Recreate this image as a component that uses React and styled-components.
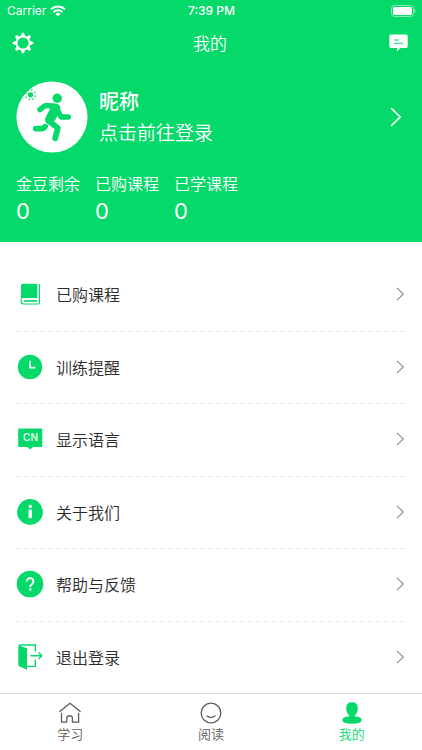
import React from "react";
import styled, { createGlobalStyle } from "styled-components";

const colors = {
  green: "#05d96a",
  text: "#2b2b2b",
  muted: "#5c5c5c",
  chevron: "#8c8c8c",
  dash: "#ececec",
  line: "#dcdcdc",
};

const GlobalStyle = createGlobalStyle`
  * {
    box-sizing: border-box;
  }

  body {
    margin: 0;
    background-color: white;
    font-family: "Noto Sans CJK SC", sans-serif;
    font-weight: 350;
    color: ${colors.text};
  }

  button {
    border: none;
    background: none;
    padding: 0;
    margin: 0;
    font: inherit;
    color: inherit;
    text-align: left;
    cursor: pointer;
  }

  svg {
    display: block;
    flex: none;
  }
`;

const Page = styled.div`
  min-height: 100vh;
  display: flex;
  flex-direction: column;
`;

const Header = styled.header`
  background-color: ${colors.green};
  color: white;
  padding-bottom: 15px;
`;

const StatusBar = styled.div`
  display: grid;
  grid-template-columns: 1fr auto 1fr;
  align-items: center;
  height: 22px;
  padding: 0 6px 0 7px;
  font-family: Inter, sans-serif;
  font-size: 12px;
  font-weight: 400;
  line-height: 22px;

  .carrier {
    display: flex;
    align-items: center;
    gap: 4px;
  }

  .time {
    font-weight: 500;
  }

  .battery {
    justify-self: end;
  }
`;

const NavBar = styled.div`
  display: grid;
  grid-template-columns: 1fr auto 1fr;
  align-items: center;
  height: 42px;
  padding: 0 14px 0 12px;

  h1 {
    margin: 0;
    font-size: 17px;
    line-height: 24px;
    font-weight: 350;
  }

  button:last-child {
    justify-self: end;
  }
`;

const Profile = styled.button`
  && {
    display: flex;
    align-items: center;
    width: 100%;
    margin-top: 17px;
    padding: 0 18px 0 16px;
  }

  .info {
    flex: 1;
    margin-left: 11px;
    display: flex;
    flex-direction: column;
    gap: 2px;
  }

  .name {
    font-size: 20px;
    line-height: 28px;
    font-weight: 500;
  }

  .hint {
    font-size: 19px;
    line-height: 30px;
  }
`;

const Stats = styled.dl`
  display: flex;
  gap: 15px;
  margin: 18px 16px 0;

  dt {
    font-size: 16px;
    line-height: 24px;
  }

  dd {
    margin: 0;
    font-family: Inter, sans-serif;
    font-size: 22px;
    font-weight: 400;
    line-height: 32px;
  }
`;

const Menu = styled.ul`
  flex: 1;
  display: flex;
  flex-direction: column;
  list-style: none;
  margin: 0;
  padding: 16px 16px 0;
`;

const MenuItem = styled.li`
  flex: 1;
  display: flex;
  min-height: 56px;

  & + & {
    background: repeating-linear-gradient(
        to right,
        ${colors.dash} 0 5px,
        transparent 5px 8px
      )
      top / 100% 1px no-repeat;
  }

  button {
    flex: 1;
    display: flex;
    align-items: center;
    font-size: 16px;
    line-height: 24px;
  }

  .icon {
    width: 28px;
    margin-right: 12px;
  }

  .label {
    flex: 1;
  }
`;

const TabBar = styled.nav`
  display: flex;
  border-top: 1px solid ${colors.line};
  padding: 7px 0;
`;

const Tab = styled.button`
  && {
    flex: 1;
    display: flex;
    flex-direction: column;
    align-items: center;
    font-size: 13px;
    line-height: 18px;
    color: ${(props) => (props.$active ? colors.green : colors.muted)};
  }
`;

const Wifi = () => (
  <svg width="16" height="12" viewBox="0 0 16 12" fill="none" stroke="white">
    <path strokeWidth="2" d="M1 4.2a10.2 10.2 0 0 1 14 0" />
    <path strokeWidth="2" d="M3.6 7a6.4 6.4 0 0 1 8.8 0" />
    <path fill="white" stroke="none" d="M5.5 9a3.7 3.7 0 0 1 5 0L8 11.6z" />
  </svg>
);

const Battery = () => (
  <svg className="battery" width="25" height="12" viewBox="0 0 25 12">
    <rect x="0.5" y="0.5" width="22" height="11" rx="3" fill="none" stroke="white" strokeOpacity="0.5" />
    <rect x="2" y="2" width="19" height="8" rx="1.5" fill="white" />
    <path d="M23.5 4a2.2 2.2 0 0 1 0 4z" fill="white" fillOpacity="0.6" />
  </svg>
);

const Gear = () => (
  <svg width="22" height="22" viewBox="-11 -11 22 22" fill="none" stroke="white">
    <circle r="6.5" strokeWidth="1.8" />
    {[0, 45, 90, 135, 180, 225, 270, 315].map((angle) => (
      <path
        key={angle}
        transform={`rotate(${angle})`}
        fill="white"
        stroke="none"
        d="M-2.2-6.8h4.4L1-10.3h-2z"
      />
    ))}
  </svg>
);

const Message = () => (
  <svg width="19" height="18" viewBox="0 0 19 18">
    <path
      fill="white"
      d="M2 0.5h15a1.7 1.7 0 0 1 1.7 1.7v10a1.7 1.7 0 0 1-1.7 1.7h-5.2L8 17.3v-3.4H2A1.7 1.7 0 0 1 .3 12.2v-10A1.7 1.7 0 0 1 2 .5z"
    />
    <path stroke={colors.green} strokeWidth="1.1" d="M5 6h5M5 9.3h9" />
  </svg>
);

const Avatar = () => (
  <svg width="72" height="72" viewBox="0 0 72 72">
    <circle cx="36" cy="36" r="35.6" fill="white" />
    <g transform="translate(14.5 13.8)" stroke={colors.green} strokeWidth="1.2">
      <circle r="2.6" fill={colors.green} stroke="none" />
      {[0, 45, 90, 135, 180, 225, 270, 315].map((angle) => (
        <path key={angle} transform={`rotate(${angle + 15})`} d="M4 0h1.8" />
      ))}
    </g>
    <circle cx="41.2" cy="17.2" r="4.7" fill={colors.green} />
    <g fill="none" stroke={colors.green} strokeLinecap="round" strokeLinejoin="round">
      <path strokeWidth="5.4" d="M23.9 28.6l4-3.2q1.5-1 3.5-.8l6 .8" />
      <path strokeWidth="5.4" d="M41 28.5l4 7.5h7.3" />
      <path strokeWidth="5.8" d="M32.8 40l9 7-2.6 10.2" />
      <path strokeWidth="5.6" d="M19.7 47.6H26q2.300-.2 3.200-2" />
    </g>
    <path
      fill={colors.green}
      d="M32 22.200l8 .4q4.600.8 4.400 5.600-.1 1.700-1.200 3.600L38 41l-6 2.300q-3.800-2.600-2.600-6.600l5-9.400z"
    />
  </svg>
);

const Chevron = ({ size = 14, color = colors.chevron }) => (
  <svg
    width={size}
    height={size}
    viewBox="0 0 14 14"
    fill="none"
    stroke={color}
    strokeWidth="1.1"
  >
    <path d="M5 .8L11.3 7 5 13.2" />
  </svg>
);

const Book = () => (
  <svg width="28" height="28" viewBox="0 0 28 28">
    <path
      fill={colors.green}
      d="M7 3.7h13.3a1 1 0 0 1 1 1V18H7.800q-1.700 0-2.800 1V5.700a2 2 0 0 1 2-2z"
    />
    <path
      fill="none"
      stroke={colors.green}
      strokeWidth="1.2"
      d="M23.4 4v18.700a1.300 1.300 0 0 1-1.300 1.300H7.500a2.400 2.400 0 0 1-2.400-2.400V19"
    />
    <path stroke={colors.green} strokeWidth="1.6" d="M8 21h13" />
  </svg>
);

const Clock = () => (
  <svg width="28" height="28" viewBox="0 0 28 28">
    <circle cx="14" cy="14" r="12.2" fill={colors.green} />
    <path d="M14 7.8v6.8h5.4" fill="none" stroke="white" strokeWidth="1.6" />
  </svg>
);

const Language = () => (
  <svg width="28" height="28" viewBox="0 0 28 28">
    <path
      fill={colors.green}
      d="M3 3.5h22.500a.8.8 0 0 1 .8.8v16.900a.8.8 0 0 1-.8.8H17l-2.800 2.500L11.400 22H3a.8.8 0 0 1-.8-.8V4.300a.8.8 0 0 1 .8-.8z"
    />
    <text
      x="14.5"
      y="16"
      fill="white"
      textAnchor="middle"
      fontFamily="Inter, sans-serif"
      fontWeight="500"
      fontSize="10"
    >
      CN
    </text>
  </svg>
);

const Info = () => (
  <svg width="28" height="28" viewBox="0 0 28 28">
    <circle cx="14" cy="14" r="12.9" fill={colors.green} />
    <circle cx="14.2" cy="8.4" r="1.7" fill="white" />
    <path d="M12.5 11.6h3.400v8.600h-3.400z" fill="white" />
  </svg>
);

const Help = () => (
  <svg width="28" height="28" viewBox="0 0 28 28">
    <circle cx="14" cy="14" r="13.3" fill={colors.green} />
    <path
      d="M10.800 11.400a3.300 3.300 0 1 1 5.100 2.700q-1.700 1-1.700 2.800"
      fill="none"
      stroke="white"
      strokeWidth="2"
    />
    <circle cx="14.2" cy="19.5" r="1.3" fill="white" />
  </svg>
);

const Logout = () => (
  <svg width="28" height="28" viewBox="0 0 28 28">
    <path fill={colors.green} d="M2.3 2.2L11 5.3v21.5l-8.7-4.1z" />
    <g fill="none" stroke={colors.green} strokeWidth="1.4" strokeLinejoin="round">
      <path d="M3 2h16.300v6.600M19.300 16.500v6.900H11M14.500 12.800h11M22.500 9.500l3.400 3.300-3.400 3.300" />
    </g>
  </svg>
);

const Home = () => (
  <svg
    width="24"
    height="24"
    viewBox="0 0 24 24"
    fill="none"
    stroke="currentColor"
    strokeWidth="1.3"
    strokeLinecap="round"
    strokeLinejoin="round"
  >
    <path d="M1.800 10.600L12 2.300l10.200 8.300" />
    <path d="M3.500 12.300v8.800h5.300v-4.100a2 2 0 0 1 2-2h1.600a2 2 0 0 1 2 2v4.100h6.200v-8.800" />
  </svg>
);

const Smile = () => (
  <svg
    width="24"
    height="24"
    viewBox="0 0 24 24"
    fill="none"
    stroke="currentColor"
    strokeWidth="1.3"
    strokeLinecap="round"
  >
    <circle cx="12" cy="12" r="9.8" />
    <path d="M8 15q4 2.800 8 0" />
  </svg>
);

const Person = () => (
  <svg width="24" height="24" viewBox="0 0 24 24" fill="currentColor">
    <path d="M12 1.200q5.800 0 5.800 5.800 0 4.800-3.100 7.300v.9q7 .6 7 3.700 0 3.800-9.700 3.800t-9.700-3.800q0-3.100 7-3.700v-.9Q6.200 11.800 6.200 7q0-5.800 5.800-5.800z" />
  </svg>
);

const stats = [
  { label: "金豆剩余", value: 0 },
  { label: "已购课程", value: 0 },
  { label: "已学课程", value: 0 },
];

const menu = [
  { label: "已购课程", Icon: Book },
  { label: "训练提醒", Icon: Clock },
  { label: "显示语言", Icon: Language },
  { label: "关于我们", Icon: Info },
  { label: "帮助与反馈", Icon: Help },
  { label: "退出登录", Icon: Logout },
];

const tabs = [
  { label: "学习", Icon: Home },
  { label: "阅读", Icon: Smile },
  { label: "我的", Icon: Person },
];

export default function App() {
  const [active, setActive] = React.useState(2);

  return (
    <Page>
      <GlobalStyle />
      <Header>
        <StatusBar>
          <span className="carrier">
            Carrier
            <Wifi />
          </span>
          <span className="time">7:39 PM</span>
          <Battery />
        </StatusBar>
        <NavBar>
          <button type="button" aria-label="设置">
            <Gear />
          </button>
          <h1>我的</h1>
          <button type="button" aria-label="消息">
            <Message />
          </button>
        </NavBar>
        <Profile type="button">
          <Avatar />
          <span className="info">
            <span className="name">昵称</span>
            <span className="hint">点击前往登录</span>
          </span>
          <Chevron size={20} color="white" />
        </Profile>
        <Stats>
          {stats.map((item) => (
            <div key={item.label}>
              <dt>{item.label}</dt>
              <dd>{item.value}</dd>
            </div>
          ))}
        </Stats>
      </Header>
      <Menu>
        {menu.map(({ label, Icon }) => (
          <MenuItem key={label}>
            <button type="button">
              <span className="icon">
                <Icon />
              </span>
              <span className="label">{label}</span>
              <Chevron />
            </button>
          </MenuItem>
        ))}
      </Menu>
      <TabBar>
        {tabs.map(({ label, Icon }, i) => (
          <Tab
            key={label}
            type="button"
            $active={active === i}
            onClick={() => setActive(i)}
          >
            <Icon />
            {label}
          </Tab>
        ))}
      </TabBar>
    </Page>
  );
}
